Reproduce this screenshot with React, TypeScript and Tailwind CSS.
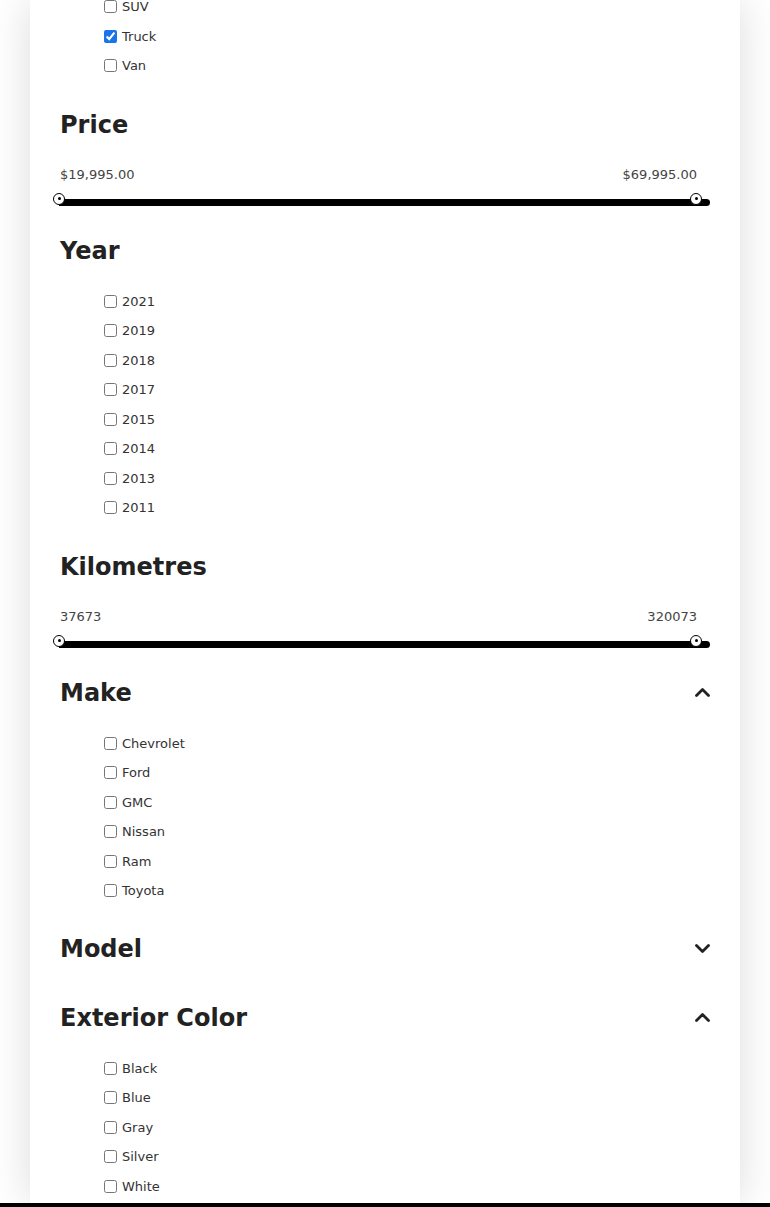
import React from 'react';

const body = { fontFamily: '"DejaVu Sans", "Liberation Sans", sans-serif' };

const Chevron = ({ up }: { up: boolean }) => (
  <svg width="15" height="9" viewBox="0 0 15 9">
    <polyline
      points={up ? '1.5,7.5 7.5,1.5 13.5,7.5' : '1.5,1.5 7.5,7.5 13.5,1.5'}
      fill="none"
      stroke="#222"
      strokeWidth="2.8"
      strokeLinecap="round"
      strokeLinejoin="round"
    />
  </svg>
);

const Heading = ({ title, chevron }: { title: string; chevron?: 'up' | 'down' }) => (
  <div className="flex h-[40px] items-center justify-between">
    <h2 className="text-[24px] font-bold text-[#222]" style={body}>
      {title}
    </h2>
    {chevron && <Chevron up={chevron === 'up'} />}
  </div>
);

const CheckList = ({ items, checked = [], className = '' }: { items: string[]; checked?: string[]; className?: string }) => (
  <ul className={`pl-[44px] ${className}`}>
    {items.map((item) => (
      <li key={item} className="flex h-[29.5px] items-center">
        <input
          type="checkbox"
          defaultChecked={checked.includes(item)}
          className="m-0 h-[13px] w-[13px] accent-[#1a73e8]"
        />
        <span className="ml-[5px] text-[13px] text-[#333]" style={body}>
          {item}
        </span>
      </li>
    ))}
  </ul>
);

const Thumb = () => (
  <div className="flex h-[12px] w-[12px] items-center justify-center rounded-full border-[1.5px] border-black bg-white">
    <div className="h-[3px] w-[3px] rounded-full bg-black" />
  </div>
);

const RangeSlider = ({ min, max }: { min: string; max: string }) => (
  <div>
    <div className="mt-[22px] flex h-[16px] items-center justify-between pr-[13px] text-[13px] text-[#444]" style={body}>
      <span>{min}</span>
      <span>{max}</span>
    </div>
    <div className="relative mt-[16px] ml-[-1px] h-[7px] rounded-r-full bg-black">
      <div className="absolute left-[-6px] top-[-6px]">
        <Thumb />
      </div>
      <div className="absolute right-[8px] top-[-6px]">
        <Thumb />
      </div>
    </div>
  </div>
);

export default function App() {
  return (
    <div className="flex h-[1207px] flex-col overflow-hidden bg-white">
      <div className="mx-[30px] flex-1 overflow-hidden bg-white px-[30px] shadow-[0_0_40px_rgba(0,0,0,0.14)]">
        <CheckList items={['SUV', 'Truck', 'Van']} checked={['Truck']} className="mt-[-8px]" />

        <div className="mt-[24px]">
          <Heading title="Price" />
          <RangeSlider min="$19,995.00" max="$69,995.00" />
        </div>

        <div className="mt-[25px]">
          <Heading title="Year" />
          <CheckList
            items={['2021', '2019', '2018', '2017', '2015', '2014', '2013', '2011']}
            className="mt-[16px]"
          />
        </div>

        <div className="mt-[24px]">
          <Heading title="Kilometres" />
          <RangeSlider min="37673" max="320073" />
        </div>

        <div className="mt-[25px]">
          <Heading title="Make" chevron="up" />
          <CheckList
            items={['Chevrolet', 'Ford', 'GMC', 'Nissan', 'Ram', 'Toyota']}
            className="mt-[16px]"
          />
        </div>

        <div className="mt-[23px]">
          <Heading title="Model" chevron="down" />
        </div>

        <div className="mt-[29px]">
          <Heading title="Exterior Color" chevron="up" />
          <CheckList items={['Black', 'Blue', 'Gray', 'Silver', 'White']} className="mt-[16px]" />
        </div>
      </div>
      <div className="h-[4px] shrink-0 bg-black" />
    </div>
  );
}
